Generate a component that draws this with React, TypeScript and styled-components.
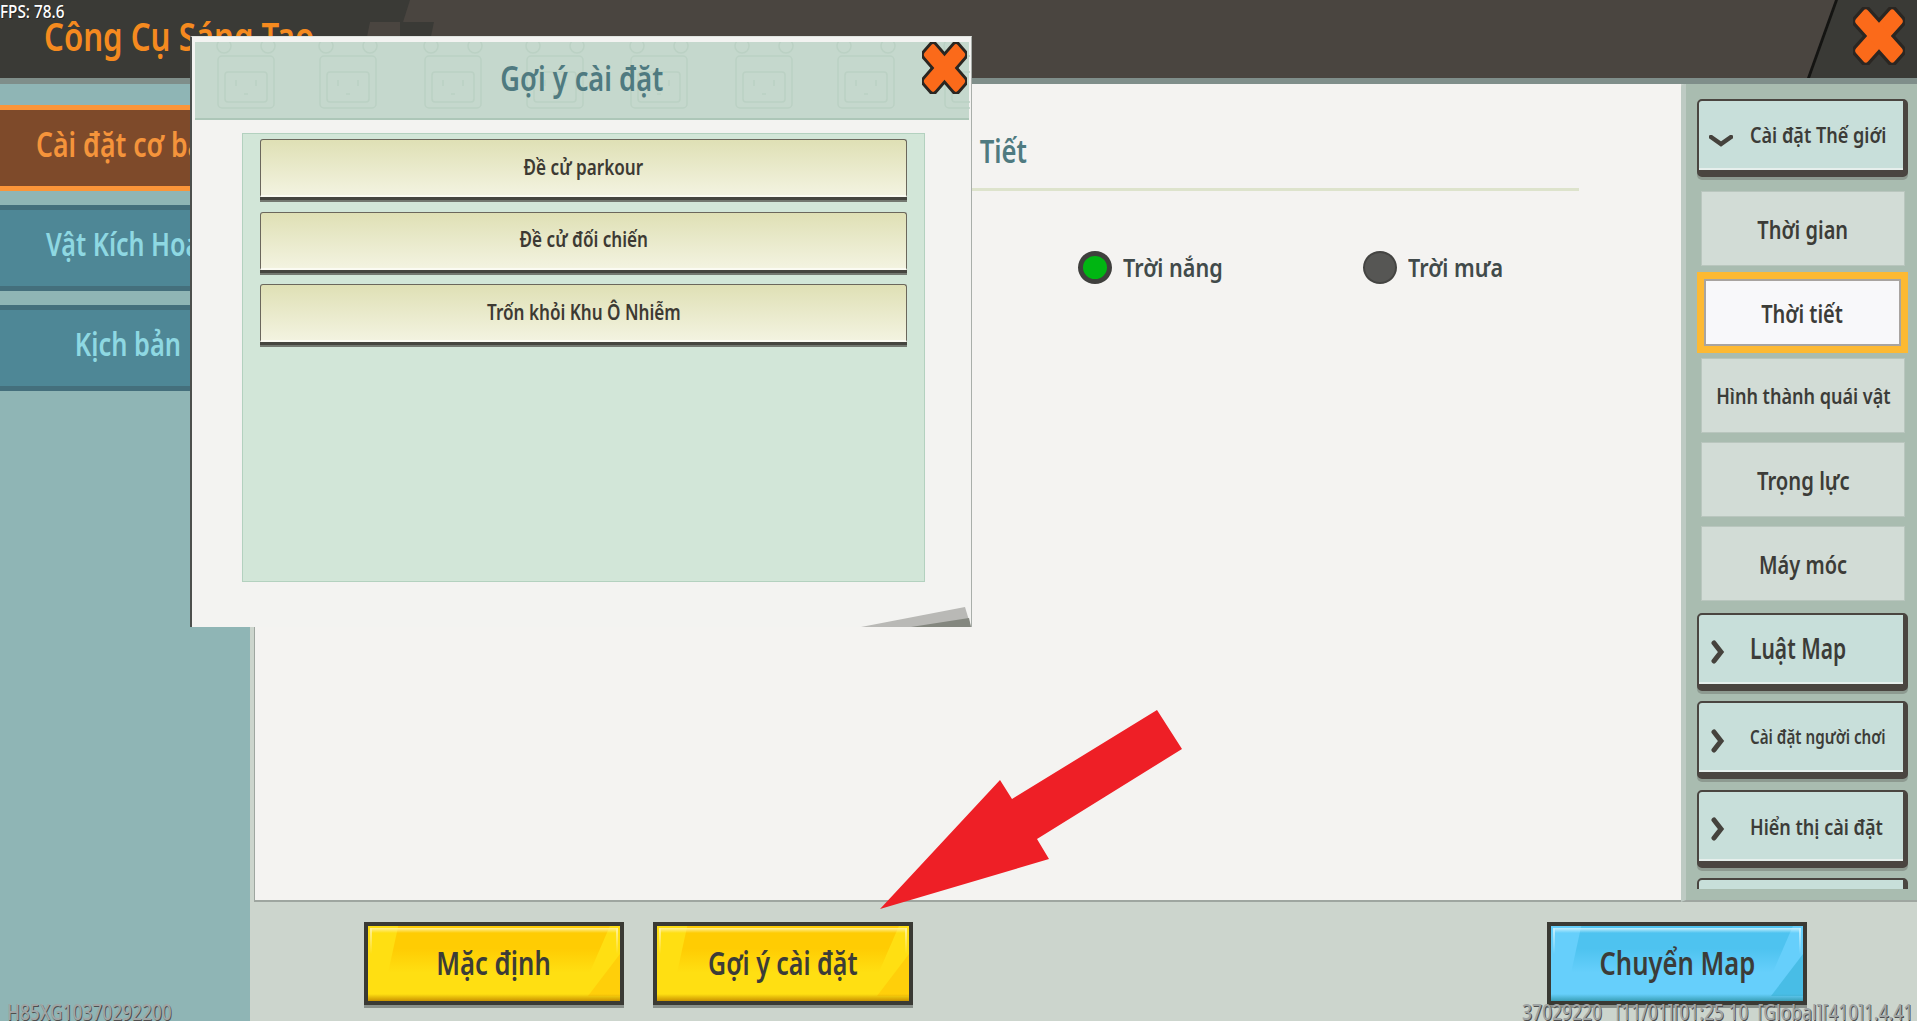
import * as React from 'react';
import styled, { createGlobalStyle, css } from 'styled-components';

const GlobalStyle = createGlobalStyle`
  html, body {
    margin: 0;
    padding: 0;
    width: 1917px;
    height: 1021px;
    overflow: hidden;
    background: #ccd5cd;
    font-family: 'Noto Sans', 'Open Sans', sans-serif;
  }
`;

const Page = styled.div`
  position: relative;
  width: 1917px;
  height: 1021px;
  overflow: hidden;
  display: flex;
  flex-direction: column;
`;

// the game font is narrower than Noto Sans, so every label gets squeezed
const Label = styled.span<{ $size: number; $color?: string; $squeeze?: number; $weight?: number; $origin?: string }>`
  display: inline-block;
  position: relative;
  white-space: pre;
  line-height: 1.2;
  font-size: ${(p) => p.$size}px;
  font-weight: ${(p) => p.$weight ?? 600};
  color: ${(p) => p.$color ?? '#3c3c38'};
  transform: scaleX(${(p) => p.$squeeze ?? 0.82});
  transform-origin: ${(p) => p.$origin ?? 'center'};
`;

const Header = styled.header`
  position: relative;
  flex: none;
  height: 78px;
  border-bottom: 6px solid #7f8e8a;
  background: #4a4540;
  display: flex;
  justify-content: space-between;
`;

const HeaderLeft = styled.div`
  width: 410px;
  padding: 12px 0 0 44px;
  box-sizing: border-box;
  background: #3a3a36;
  clip-path: polygon(0 0, 100% 0, 94% 100%, 0 100%);
`;

const HeaderStripe = styled.div`
  position: absolute;
  left: 366px;
  top: 22px;
  width: 68px;
  height: 20px;
  background: linear-gradient(90deg, #4a4540 0 50%, #3a3a36 50%);
  clip-path: polygon(6% 0, 100% 0, 94% 100%, 0 100%);
`;

const HeaderRight = styled.div`
  width: 110px;
  background: #141412;
  clip-path: polygon(28px 0, 100% 0, 100% 100%, 0 100%);
`;

const HeaderRightFill = styled.div`
  height: 100%;
  background: #3a3a36;
  clip-path: polygon(31px 0, 100% 0, 100% 100%, 3px 100%);
  display: flex;
  align-items: flex-start;
  justify-content: flex-end;
  padding: 7px 12px 0 0;
  box-sizing: border-box;
`;

const Body = styled.div`
  flex: 1;
  display: flex;
  min-height: 0;
`;

const Sidebar = styled.nav`
  flex: none;
  width: 250px;
  background: #8fb5b5;
  padding-top: 21px;
  display: flex;
  flex-direction: column;
  gap: 14px;
`;

const Tab = styled.div<{ $active?: boolean }>`
  height: 86px;
  box-sizing: border-box;
  padding: 0 0 8px 6px;
  display: flex;
  align-items: center;
  justify-content: center;
  ${(p) =>
    p.$active
      ? css`
          background: #7e4a2a;
          border-top: 5px solid #fb9539;
          border-bottom: 5px solid #fb9539;
        `
      : css`
          background: #4e8796;
          border-top: 5px solid #446f7c;
          border-bottom: 5px solid #446f7c;
        `}
`;

const Main = styled.main`
  flex: 1;
  min-width: 0;
  display: flex;
  flex-direction: column;
`;

const TopRow = styled.div`
  flex: none;
  height: 818px;
  display: flex;
`;

const Content = styled.section`
  flex: 1;
  margin-left: 4px;
  background: #f4f3f1;
  border-left: 1px solid #9ea6a0;
  border-bottom: 2px solid #9ea6a0;
  padding-top: 48px;
`;

const HeadingRow = styled.div`
  width: 772px;
  text-align: right;
`;

const Rule = styled.div`
  width: 1324px;
  height: 3px;
  margin-top: 18px;
  background: #dde3cc;
`;

const RadioRow = styled.div`
  display: flex;
  margin: 60px 0 0 823px;
`;

const RadioItem = styled.div`
  width: 285px;
  display: flex;
  align-items: center;
  gap: 11px;
`;

const RadioDot = styled.span<{ $on?: boolean }>`
  flex: none;
  width: 34px;
  height: 33px;
  box-sizing: border-box;
  border-radius: 50%;
  border: ${(p) => (p.$on ? '5px solid #3f3f3d' : '2px solid #444442')};
  background: ${(p) => (p.$on ? '#00b512' : '#565654')};
`;

const WorldPanel = styled.aside`
  flex: none;
  width: 236px;
  box-sizing: border-box;
  background: #a9bcb0;
  border-left: 5px solid #bdcac3;
  border-bottom: 2px solid #9ea6a0;
  border-top-left-radius: 4px;
  padding: 15px 9px 11px 11px;
`;

const WorldList = styled.div`
  height: 790px;
  overflow: hidden;
  display: flex;
  flex-direction: column;
`;

const SectionButton = styled.div<{ $after?: number }>`
  flex: none;
  width: 211px;
  height: 78px;
  box-sizing: border-box;
  margin-bottom: ${(p) => p.$after ?? 10.5}px;
  display: flex;
  align-items: center;
  background: #c8dfda;
  border: solid #4a4540;
  border-width: 2px 5px 7px 2px;
  border-radius: 5px;
  box-shadow: 0 3px 0 #8d9a90, inset 0 -2px 0 #e6efec;
`;

const ChevronSlot = styled.span<{ $down?: boolean }>`
  flex: none;
  width: 51px;
  display: flex;
  justify-content: ${(p) => (p.$down ? 'flex-start' : 'center')};
  padding: ${(p) => (p.$down ? '12px 0 0 10px' : '6px 14px 0 0')};
  box-sizing: border-box;
`;

const WorldItem = styled.div<{ $after?: number }>`
  flex: none;
  height: 75px;
  box-sizing: border-box;
  margin: 0 3px ${(p) => p.$after ?? 9}px 4px;
  display: flex;
  align-items: center;
  justify-content: center;
  background: #d2dcd6;
  border: 1px solid #b9c6be;
`;

const WorldItemSelected = styled.div`
  flex: none;
  width: 211px;
  height: 81px;
  box-sizing: border-box;
  margin-bottom: 5px;
  display: flex;
  align-items: center;
  justify-content: center;
  background: #f8f8fa;
  border: 7px solid #fdb933;
  box-shadow: inset 0 0 0 2px #a8a4a0;
`;

const BottomBar = styled.footer`
  flex: 1;
  display: flex;
  align-items: flex-start;
  padding: 20px 0 0 114px;
  background: #ccd5cd;
`;

const tones = {
  yellow: { base: '#ffdf12', top: '#ffcc03', corner: '#ffcf0a', low: '#c99300', shine: '#fff09a' },
  blue: { base: '#66cffb', top: '#4ec3f0', corner: '#48bde6', low: '#3aa0b8', shine: '#c4effd' },
};

const GameButton = styled.div<{ $tone: 'yellow' | 'blue'; $gap?: number }>`
  position: relative;
  flex: none;
  width: 260px;
  height: 83px;
  box-sizing: border-box;
  margin-right: ${(p) => p.$gap ?? 0}px;
  display: flex;
  align-items: center;
  justify-content: center;
  overflow: hidden;
  border: 4px solid #3a3a34;
  background: ${(p) => tones[p.$tone].base};
  box-shadow: 0 3px 0 #8a918b;
  &::before {
    content: '';
    position: absolute;
    inset: 0;
    background: linear-gradient(180deg, ${(p) => tones[p.$tone].top} 30%, ${(p) => tones[p.$tone].base} 62%);
    clip-path: polygon(12% 0, 96% 0, 88% 62%, 8% 62%);
  }
  &::after {
    content: '';
    position: absolute;
    inset: 0;
    background:
      linear-gradient(${(p) => tones[p.$tone].shine}, transparent) left 2px top 2px / calc(100% - 4px) 5px no-repeat,
      linear-gradient(${(p) => tones[p.$tone].shine}, transparent) left 2px top 2px / 2px 26px no-repeat,
      linear-gradient(${(p) => tones[p.$tone].shine}, transparent) right 2px top 2px / 2px 26px no-repeat,
      linear-gradient(transparent, ${(p) => tones[p.$tone].low}) left bottom / 100% 7px no-repeat;
  }
`;

const ButtonCorner = styled.span<{ $tone: 'yellow' | 'blue' }>`
  position: absolute;
  right: 0;
  bottom: 5px;
  width: 32px;
  height: 42px;
  background: ${(p) => tones[p.$tone].corner};
  clip-path: polygon(100% 0, 100% 100%, 0 100%);
`;

const Spacer = styled.div`
  flex: 1;
`;

const BarEnd = styled.div`
  display: flex;
  margin-right: 110px;
`;

const Fps = styled.div`
  position: absolute;
  left: 0;
  top: 1px;
  text-shadow: 1px 1px 0 #222;
`;

const StatusText = styled.div<{ $side: 'left' | 'right' }>`
  position: absolute;
  top: 1000px;
  ${(p) => (p.$side === 'left' ? 'left: 7px;' : 'right: 4px;')}
  text-shadow: 1px 1px 0 #4e4e4e;
`;

const Modal = styled.div`
  position: absolute;
  left: 190px;
  top: 36px;
  width: 782px;
  height: 591px;
  box-sizing: border-box;
  padding: 5px 2px 0 3px;
  background: #f3f3f1;
  border-left: 2px solid #4c4f4d;
  border-right: 1px solid #a9aeaa;
  border-top: 1px solid #dfe3df;
  overflow: hidden;
`;

const ModalHeader = styled.div`
  position: relative;
  height: 78px;
  box-sizing: border-box;
  padding-bottom: 4px;
  display: flex;
  align-items: center;
  justify-content: center;
  background: #c5d8cd;
  border-bottom: 2px solid #adc7b8;
`;

const ModalClose = styled.div`
  position: absolute;
  right: 2px;
  top: 0;
`;

const Watermark = styled.svg`
  position: absolute;
  inset: 0;
`;

const SuggestionPanel = styled.div`
  height: 449px;
  box-sizing: border-box;
  margin: 13px 44px 0 47px;
  padding: 5px 17px 0;
  background: #d2e6d8;
  border: 1px solid #b3d1bf;
  display: flex;
  flex-direction: column;
  gap: 14.5px;
`;

const SuggestionButton = styled.div`
  flex: none;
  height: 58px;
  box-sizing: border-box;
  display: flex;
  align-items: center;
  justify-content: center;
  background: linear-gradient(180deg, #dfe0b5, #f3f3e0);
  border: 1px solid #6b675c;
  border-bottom: 2px solid #fbfbf2;
  border-radius: 3px 3px 0 0;
  box-shadow: 0 3px 0 #45453f, 0 5px 0 #737870;
`;

const PageCurl = styled.svg`
  position: absolute;
  right: 0;
  bottom: 0;
`;

const Arrow = styled.svg`
  position: absolute;
  left: 880px;
  top: 710px;
`;

// two crossed bars, dark one first so it reads as an outline
const CloseIcon = ({ width, height }: { width: number; height: number }) => (
  <svg width={width} height={height} viewBox="0 0 50 50" preserveAspectRatio="none">
    <g transform="rotate(45 25 25)" fill="#2a2622">
      <rect x="14" y="-4" width="22" height="58" rx="5" />
      <rect x="-4" y="14" width="58" height="22" rx="5" />
    </g>
    <g transform="rotate(45 25 25)" fill="#fb6a1a">
      <rect x="17" y="-1" width="16" height="52" rx="3" />
      <rect x="-1" y="17" width="52" height="16" rx="3" />
    </g>
  </svg>
);

const Chevron = ({ down }: { down?: boolean }) =>
  down ? (
    <svg width="24" height="14" viewBox="0 0 24 14">
      <path d="M2 2 L12 9 L22 2" fill="none" stroke="#45423c" strokeWidth="4.5" strokeLinecap="round" />
    </svg>
  ) : (
    <svg width="14" height="24" viewBox="0 0 14 24">
      <path d="M3 3 L10 12 L3 21" fill="none" stroke="#45423c" strokeWidth="5" strokeLinecap="round" />
    </svg>
  );

const Cube = ({ x }: { x: number }) => (
  <g transform={`translate(${x} 0)`} fill="none" stroke="#bbd1c4" strokeWidth="1.5">
    <rect x="0" y="14" width="56" height="52" rx="4" />
    <rect x="7" y="30" width="42" height="30" rx="3" />
    <circle cx="6" cy="4" r="7" />
    <circle cx="50" cy="4" r="7" />
    <path d="M18 38 v6 M38 38 v6 M26 52 h4" />
  </g>
);

const SECTION_LABELS: { text: string; size: number; squeeze: number }[] = [
  { text: 'Luật Map', size: 28, squeeze: 0.75 },
  { text: 'Cài đặt người chơi', size: 19, squeeze: 0.8 },
  { text: 'Hiển thị cài đặt', size: 22, squeeze: 0.82 },
];

const ITEM_LABELS = [
  { text: 'Hình thành quái vật', size: 22, squeeze: 0.82, after: 9 },
  { text: 'Trọng lực', size: 25, squeeze: 0.81, after: 9 },
  { text: 'Máy móc', size: 25, squeeze: 0.8, after: 11.5 },
];

const SUGGESTIONS = ['Đề cử parkour', 'Đề cử đối chiến', 'Trốn khỏi Khu Ô Nhiễm'];

export default function App() {
  return (
    <Page>
      <GlobalStyle />
      <Header>
        <HeaderLeft>
          <Label $size={40} $color="#f58a1f" $squeeze={0.78} $origin="left">
            Công Cụ Sáng Tạo
          </Label>
        </HeaderLeft>
        <HeaderStripe />
        <HeaderRight>
          <HeaderRightFill>
            <CloseIcon width={52} height={58} />
          </HeaderRightFill>
        </HeaderRight>
      </Header>

      <Body>
        <Sidebar>
          <Tab $active>
            <Label $size={35} $color="#f5943b" $squeeze={0.76}>
              Cài đặt cơ bản
            </Label>
          </Tab>
          <Tab>
            <Label $size={33} $color="#8ed8e2" $squeeze={0.76}>
              Vật Kích Hoạt
            </Label>
          </Tab>
          <Tab>
            <Label $size={33} $color="#8ed8e2" $squeeze={0.77}>
              Kịch bản
            </Label>
          </Tab>
        </Sidebar>

        <Main>
          <TopRow>
            <Content>
              <HeadingRow>
                <Label $size={32} $color="#4f7a80" $squeeze={0.8} $origin="right">
                  Thời Tiết
                </Label>
              </HeadingRow>
              <Rule />
              <RadioRow>
                <RadioItem>
                  <RadioDot $on />
                  <Label $size={26} $color="#414a4a" $squeeze={0.83} $origin="left">
                    Trời nắng
                  </Label>
                </RadioItem>
                <RadioItem>
                  <RadioDot />
                  <Label $size={26} $color="#414a4a" $squeeze={0.83} $origin="left">
                    Trời mưa
                  </Label>
                </RadioItem>
              </RadioRow>
            </Content>

            <WorldPanel>
              <WorldList>
                <SectionButton $after={14}>
                  <ChevronSlot $down>
                    <Chevron down />
                  </ChevronSlot>
                  <Label $size={21} $squeeze={0.86} $origin="left">
                    Cài đặt Thế giới
                  </Label>
                </SectionButton>
                <WorldItem $after={6}>
                  <Label $size={25} $squeeze={0.8}>
                    Thời gian
                  </Label>
                </WorldItem>
                <WorldItemSelected>
                  <Label $size={25} $squeeze={0.8}>
                    Thời tiết
                  </Label>
                </WorldItemSelected>
                {ITEM_LABELS.map((item) => (
                  <WorldItem key={item.text} $after={item.after}>
                    <Label $size={item.size} $squeeze={item.squeeze}>
                      {item.text}
                    </Label>
                  </WorldItem>
                ))}
                {SECTION_LABELS.map((item) => (
                  <SectionButton key={item.text}>
                    <ChevronSlot>
                      <Chevron />
                    </ChevronSlot>
                    <Label $size={item.size} $squeeze={item.squeeze} $origin="left">
                      {item.text}
                    </Label>
                  </SectionButton>
                ))}
                <SectionButton />
              </WorldList>
            </WorldPanel>
          </TopRow>

          <BottomBar>
            <GameButton $tone="yellow" $gap={29}>
              <ButtonCorner $tone="yellow" />
              <Label $size={32} $squeeze={0.8}>
                Mặc định
              </Label>
            </GameButton>
            <GameButton $tone="yellow">
              <ButtonCorner $tone="yellow" />
              <Label $size={32} $squeeze={0.78}>
                Gợi ý cài đặt
              </Label>
            </GameButton>
            <Spacer />
            <BarEnd>
              <GameButton $tone="blue">
                <ButtonCorner $tone="blue" />
                <Label $size={32} $squeeze={0.8}>
                  Chuyển Map
                </Label>
              </GameButton>
            </BarEnd>
          </BottomBar>
        </Main>
      </Body>

      <Modal>
        <ModalHeader>
          <Watermark width="775" height="78">
            {[23, 125, 230, 332, 436, 541, 643, 750].map((x) => (
              <Cube key={x} x={x} />
            ))}
          </Watermark>
          <Label $size={34} $color="#4f7a80" $squeeze={0.8}>
            Gợi ý cài đặt
          </Label>
          <ModalClose>
            <CloseIcon width={45} height={52} />
          </ModalClose>
        </ModalHeader>
        <SuggestionPanel>
          {SUGGESTIONS.map((text) => (
            <SuggestionButton key={text}>
              <Label $size={21} $squeeze={0.815} $color="#3d3a33">
                {text}
              </Label>
            </SuggestionButton>
          ))}
        </SuggestionPanel>
        <PageCurl width="110" height="20" viewBox="0 0 110 20">
          <polygon points="0,20 104,0 110,20" fill="#b9b9b6" />
          <polygon points="50,20 108,11 110,20" fill="#84877f" />
        </PageCurl>
      </Modal>

      <Arrow width="310" height="205" viewBox="880 710 310 205">
        <polygon
          points="1157,710 1182,749 1037,839 1049,859 880,909 1000,780 1012,799"
          fill="#ee1f26"
        />
      </Arrow>

      <Fps>
        <Label $size={18} $color="#fff" $squeeze={0.85} $origin="left" $weight={500}>
          FPS: 78.6
        </Label>
      </Fps>
      <StatusText $side="left">
        <Label $size={21} $color="#a0a5a5" $squeeze={0.825} $origin="left" $weight={500}>
          H85XG10370292200
        </Label>
      </StatusText>
      <StatusText $side="right">
        <Label $size={21} $color="#a0a5a5" $squeeze={0.83} $origin="right" $weight={500}>
          {'37029220   [11/01][01:25 10  [Global][410]1.4.41'}
        </Label>
      </StatusText>
    </Page>
  );
}
